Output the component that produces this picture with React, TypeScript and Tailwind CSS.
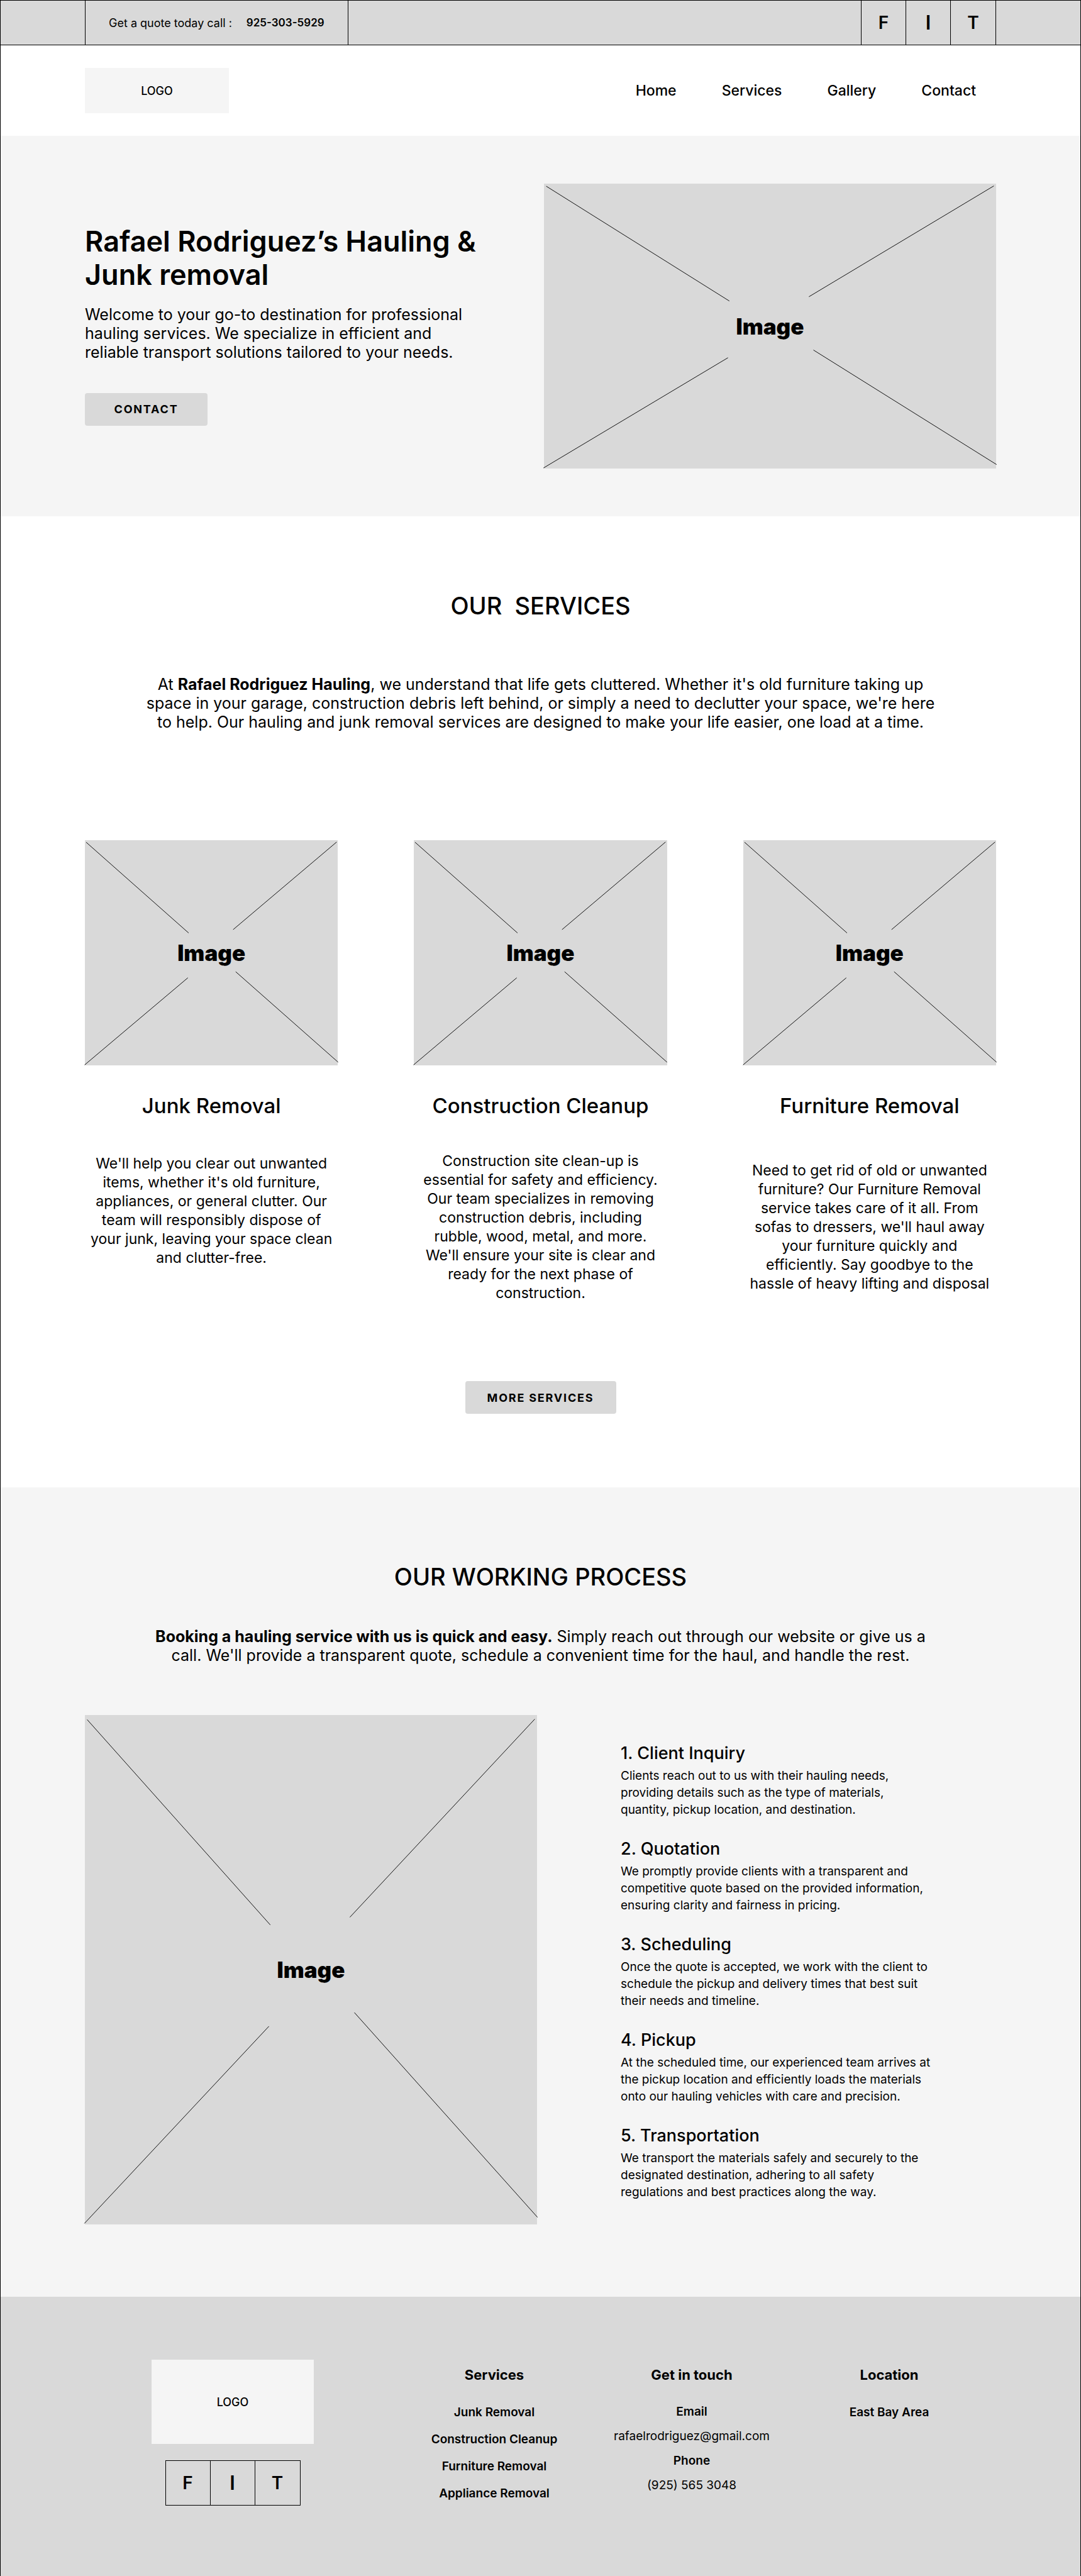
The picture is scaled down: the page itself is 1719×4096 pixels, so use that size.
type Service = { title: string; text: string; align: string };

const navItems = ["Home", "Services", "Gallery", "Contact"];

const services: Service[] = [
  {
    title: "Junk Removal",
    text: "We'll help you clear out unwanted\nitems, whether it's old furniture,\nappliances, or general clutter. Our\nteam will responsibly dispose of\nyour junk, leaving your space clean\nand clutter-free.",
    align: "justify-start pt-1",
  },
  {
    title: "Construction Cleanup",
    text: "Construction site clean-up is\nessential for safety and efficiency.\nOur team specializes in removing\nconstruction debris, including\nrubble, wood, metal, and more.\nWe'll ensure your site is clear and\nready for the next phase of\nconstruction.",
    align: "justify-center",
  },
  {
    title: "Furniture Removal",
    text: "Need to get rid of old or unwanted\nfurniture? Our Furniture Removal\nservice takes care of it all. From\nsofas to dressers, we'll haul away\nyour furniture quickly and\nefficiently. Say goodbye to the\nhassle of heavy lifting and disposal",
    align: "justify-center",
  },
];

const steps = [
  {
    title: "1. Client Inquiry",
    text: "Clients reach out to us with their hauling needs,\nproviding details such as the type of materials,\nquantity, pickup location, and destination.",
  },
  {
    title: "2. Quotation",
    text: "We promptly provide clients with a transparent and\ncompetitive quote based on the provided information,\nensuring clarity and fairness in pricing.",
  },
  {
    title: "3. Scheduling",
    text: "Once the quote is accepted, we work with the client to\nschedule the pickup and delivery times that best suit\ntheir needs and timeline.",
  },
  {
    title: "4. Pickup",
    text: "At the scheduled time, our experienced team arrives at\nthe pickup location and efficiently loads the materials\nonto our hauling vehicles with care and precision.",
  },
  {
    title: "5. Transportation",
    text: "We transport the materials safely and securely to the\ndesignated destination, adhering to all safety\nregulations and best practices along the way.",
  },
];

const footerLinks = ["Junk Removal", "Construction Cleanup", "Furniture Removal", "Appliance Removal"];

/* Grey picture frame with broken diagonals and a centred caption. */
function Placeholder({ height }: { height: string }) {
  return (
    <div className={`relative flex items-center justify-center bg-[#d9d9d9] ${height}`}>
      <svg
        className="absolute inset-0 h-full w-full overflow-visible"
        viewBox="0 0 1000 1000"
        preserveAspectRatio="none"
        stroke="#111"
        strokeWidth="1"
        fill="none"
        aria-hidden="true"
      >
        <path vectorEffect="non-scaling-stroke" d="M5 9L410 412" />
        <path vectorEffect="non-scaling-stroke" d="M995 8L586 397" />
        <path vectorEffect="non-scaling-stroke" d="M-1 998L407 611" />
        <path vectorEffect="non-scaling-stroke" d="M1001 986L596 584" />
      </svg>
      <span className="relative text-[35px] leading-10 font-black">Image</span>
    </div>
  );
}

function SocialLinks({ className }: { className: string }) {
  return (
    <div className={`flex divide-x divide-black border-x border-black font-semibold ${className}`}>
      <a href="#f" className="flex h-[70px] w-[71px] items-center justify-center text-[28px]">F</a>
      <a href="#i" className="flex h-[70px] w-[71px] items-center justify-center text-[31px]">I</a>
      <a href="#t" className="flex h-[70px] w-[71px] items-center justify-center text-[28px]">T</a>
    </div>
  );
}

export default function App() {
  return (
    <div className="border border-black bg-white font-[Inter,sans-serif] text-black">
      <div className="flex justify-between border-b border-black bg-[#d9d9d9] px-[134px]">
        <p className="flex items-center gap-[23px] border-x border-black px-[37px] text-[18px]">
          <span>Get a quote today call :</span>
          <a href="tel:9253035929" className="text-[17px] leading-[27px] font-semibold">925-303-5929</a>
        </p>
        <SocialLinks className="" />
      </div>

      <header className="flex items-center justify-between px-[134px] py-9">
        <a href="#home" className="flex h-[72px] w-[229px] items-center justify-center bg-[#f5f5f5] text-[18px] font-medium">
          LOGO
        </a>
        <nav className="flex gap-[72px] pr-8 text-[23px] font-medium">
          {navItems.map((item) => (
            <a key={item} href={`#${item.toLowerCase()}`}>{item}</a>
          ))}
        </nav>
      </header>

      <section className="grid grid-cols-2 items-center gap-[11px] bg-[#f5f5f5] px-[134px] py-[76px]">
        <div className="pb-1">
          <h1 className="text-[45px] leading-[53px] font-semibold whitespace-pre-line">
            {"Rafael Rodriguez’s Hauling &\nJunk removal"}
          </h1>
          <p className="mt-[22px] text-[25px] leading-[30px] whitespace-pre-line">
            {"Welcome to your go-to destination for professional\nhauling services. We specialize in efficient and\nreliable transport solutions tailored to your needs."}
          </p>
          <button className="mt-[50px] h-[52px] w-[195px] rounded bg-[#d9d9d9] text-[18px] font-bold tracking-widest">
            CONTACT
          </button>
        </div>
        <Placeholder height="h-[453px]" />
      </section>

      <section className="px-[134px] pt-[118px] pb-[117px] text-center">
        <h2 className="text-[38px] leading-[48px] font-medium">OUR &nbsp;SERVICES</h2>
        <p className="mt-[86px] text-[25px] leading-[30px]">
          At <strong className="font-bold">Rafael Rodriguez Hauling</strong>, we understand that life gets cluttered.
          Whether it's old furniture taking up
          <br />
          space in your garage, construction debris left behind, or simply a need to declutter your space, we're here
          <br />
          to help. Our hauling and junk removal services are designed to make your life easier, one load at a time.
        </p>
        <div className="mt-[173px] grid grid-cols-3 gap-[121px]">
          {services.map((s) => (
            <article key={s.title} className="flex flex-col">
              <Placeholder height="h-[358px]" />
              <h3 className="mt-11 text-[33px] leading-10 font-medium">{s.title}</h3>
              <div className={`mt-[53px] flex flex-1 flex-col ${s.align}`}>
                <p className="text-[23px] leading-[30px] whitespace-pre-line">{s.text}</p>
              </div>
            </article>
          ))}
        </div>
        <button className="mt-[125px] h-[52px] w-[240px] rounded bg-[#d9d9d9] text-[18px] font-bold tracking-widest">
          MORE SERVICES
        </button>
      </section>

      <section className="bg-[#f5f5f5] px-[134px] pt-[118px] pb-[115px]">
        <h2 className="text-center text-[38px] leading-[48px] font-medium">OUR WORKING PROCESS</h2>
        <p className="mt-14 text-center text-[25px] leading-[30px]">
          <strong className="font-bold">Booking a hauling service with us is quick and easy.</strong> Simply reach out
          through our website or give us a
          <br />
          call. We'll provide a transparent quote, schedule a convenient time for the haul, and handle the rest.
        </p>
        <div className="mt-20 grid grid-cols-2 gap-[11px]">
          <Placeholder height="h-[810px]" />
          <ol className="flex flex-col gap-[33px] pt-[45px] pl-[122px]">
            {steps.map((s) => (
              <li key={s.title}>
                <h3 className="text-[27px] leading-8 font-medium">{s.title}</h3>
                <p className="mt-1.5 text-[19px] leading-[27px] whitespace-pre-line">{s.text}</p>
              </li>
            ))}
          </ol>
        </div>
      </section>

      <footer className="flex bg-[#d9d9d9] pt-[100px] pr-[147px] pb-[111px] pl-[240px]">
        <div className="mr-[130px] flex w-[258px] shrink-0 flex-col items-center">
          <a href="#home" className="flex h-[134px] w-full items-center justify-center bg-[#f5f5f5] text-[18px] font-medium">
            LOGO
          </a>
          <SocialLinks className="mt-[26px] border-y" />
        </div>
        <div className="grid flex-1 grid-cols-3 pt-2.5 text-center text-[19px]">
          <div>
            <h4 className="text-[22px] leading-7 font-bold">Services</h4>
            <ul className="mt-6 leading-[43px] font-semibold">
              {footerLinks.map((l) => (
                <li key={l}>
                  <a href="#services">{l}</a>
                </li>
              ))}
            </ul>
          </div>
          <div>
            <h4 className="text-[22px] leading-7 font-bold">Get in touch</h4>
            <dl className="mt-[25px] leading-[39px]">
              <dt className="font-semibold">Email</dt>
              <dd>
                <a href="mailto:rafaelrodriguez@gmail.com">rafaelrodriguez@gmail.com</a>
              </dd>
              <dt className="font-semibold">Phone</dt>
              <dd>
                <a href="tel:9255653048">(925) 565 3048</a>
              </dd>
            </dl>
          </div>
          <div>
            <h4 className="text-[22px] leading-7 font-bold">Location</h4>
            <p className="mt-6 leading-[43px] font-semibold">East Bay Area</p>
          </div>
        </div>
      </footer>
    </div>
  );
}
